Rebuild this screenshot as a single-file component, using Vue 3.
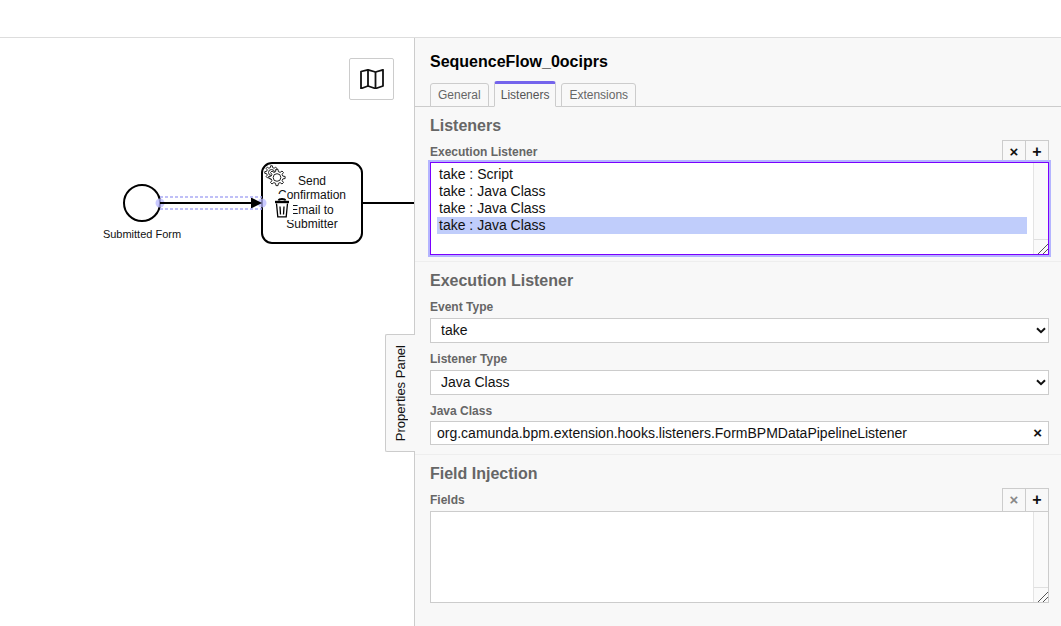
<template>
  <div class="page">
    <header class="topbar"></header>
    <div class="workspace">
      <div class="canvas">
        <svg class="diagram" width="414" height="588" viewBox="0 38 414 588">
          <path d="M362 203H414" class="flow" />
          <circle cx="142" cy="203" r="18" class="shape" />
          <text x="142" y="238" class="label" text-anchor="middle">Submitted Form</text>
          <rect x="262" y="163" width="100" height="80" rx="10" class="shape" />
          <text x="312" y="185" class="task-text" text-anchor="middle">Send</text>
          <text x="312" y="199" class="task-text" text-anchor="middle">Confirmation</text>
          <text x="312" y="214" class="task-text" text-anchor="middle">Email to</text>
          <text x="312" y="228" class="task-text" text-anchor="middle">Submitter</text>
          <circle cx="160" cy="203" r="4.500" class="handle" />
          <circle cx="262" cy="203" r="4.500" class="handle" />
          <path d="M160 203H254" class="flow" />
          <path d="M251 197.500L262 203L251 208.500Z" fill="#000" />
          <path d="M160 197H262M160 209H262" class="selection" />
          <!-- service task gears -->
          <g class="gear">
            <path :d="backGear" fill="#fff" />
            <circle cx="271.500" cy="172.500" r="3" />
            <path :d="frontGear" fill="#fff" />
            <circle cx="277" cy="177.500" r="3.800" fill="#fff" />
          </g>
          <!-- delete context pad entry -->
          <path d="M273 194H287V200H293V220H273Z" fill="#fff" />
          <g class="trash">
            <path d="M276.500 203.500L277.800 216.800H286.200L287.500 203.500" />
            <path d="M280 206.500L280.500 214.500M284 206.500L283.500 214.500" />
            <path d="M275 202H289" stroke-width="2.400" />
            <path d="M278.500 200.500Q279 199 282 199Q285 199 285.500 200.500" stroke-width="1.800" />
          </g>
        </svg>
        <button class="map-btn" type="button" aria-label="Toggle minimap">
          <svg width="24" height="20" viewBox="0 0 24 20">
            <path d="M1 2.500L8 .8L15.500 3L23 .8V17L15.500 19.500L8 17L1 19.500Z" />
            <path d="M8 .8V17M15.500 3V19.500" />
          </svg>
        </button>
        <div class="panel-toggle"><span>Properties Panel</span></div>
      </div>

      <aside class="panel">
        <div class="panel-head">
          <h1 class="panel-title">SequenceFlow_0ociprs</h1>
          <nav class="tabs">
            <a v-for="tab in tabs" :key="tab" class="tab" :class="{ active: tab === 'Listeners' }">{{ tab }}</a>
          </nav>
        </div>

        <section class="group group-listeners">
          <h2 class="group-title">Listeners</h2>
          <div class="field-head">
            <label>Execution Listener</label>
            <div class="actions">
              <button type="button" class="act cross">×</button>
              <button type="button" class="act">+</button>
            </div>
          </div>
          <div class="listbox focused">
            <div class="list-rows">
              <div
                v-for="(item, i) in listeners"
                :key="i"
                class="list-row"
                :class="{ selected: i === listeners.length - 1 }"
              >{{ item }}</div>
            </div>
            <div class="scroll-track"><div class="grip"></div></div>
          </div>
        </section>

        <section class="group group-detail">
          <h2 class="group-title">Execution Listener</h2>
          <label class="field-label first">Event Type</label>
          <div class="select-wrap">
            <select><option>take</option></select>
            <svg class="chevron" width="10" height="7" viewBox="0 0 10 7"><path d="M1 1.200L5 5.200L9 1.200" /></svg>
          </div>
          <label class="field-label">Listener Type</label>
          <div class="select-wrap">
            <select><option>Java Class</option></select>
            <svg class="chevron" width="10" height="7" viewBox="0 0 10 7"><path d="M1 1.200L5 5.200L9 1.200" /></svg>
          </div>
          <label class="field-label tight">Java Class</label>
          <div class="input-wrap">
            <input type="text" value="org.camunda.bpm.extension.hooks.listeners.FormBPMDataPipelineListener" />
            <span class="clear">×</span>
          </div>
        </section>

        <section class="group group-fields">
          <h2 class="group-title">Field Injection</h2>
          <div class="field-head">
            <label>Fields</label>
            <div class="actions">
              <button type="button" class="act cross muted">×</button>
              <button type="button" class="act">+</button>
            </div>
          </div>
          <div class="listbox">
            <div class="list-rows"></div>
            <div class="scroll-track"><div class="grip"></div></div>
          </div>
        </section>
      </aside>
    </div>
  </div>
</template>

<script setup>
const tabs = ['General', 'Listeners', 'Extensions']
const listeners = ['take : Script', 'take : Java Class', 'take : Java Class', 'take : Java Class']

// toothed outline for the service task icon
function gearPath(cx, cy, inner, outer, teeth) {
  const step = (Math.PI * 2) / teeth
  const pts = []
  for (let i = 0; i < teeth; i++) {
    const a = i * step
    const spots = [
      [inner, a - step * 0.3],
      [outer, a - step * 0.16],
      [outer, a + step * 0.16],
      [inner, a + step * 0.3]
    ]
    for (const [r, t] of spots) {
      pts.push((cx + r * Math.cos(t)).toFixed(2) + ' ' + (cy + r * Math.sin(t)).toFixed(2))
    }
  }
  return 'M' + pts.join('L') + 'Z'
}

const backGear = gearPath(271.5, 172.5, 5, 6.8, 8)
const frontGear = gearPath(277, 177.5, 6, 8.2, 8)
</script>

<style>
html, body { margin: 0; overflow: hidden; background: #fff; }
</style>

<style scoped>
.page {
  width: 1061px;
  height: 626px;
  display: flex;
  flex-direction: column;
  font-family: "Liberation Sans", Arial, sans-serif;
  color: #000;
  overflow: hidden;
}
.topbar {
  height: 38px;
  flex: none;
  box-sizing: border-box;
  border-bottom: 1px solid #ddd;
  background: #fff;
}
.workspace {
  flex: 1;
  display: flex;
  min-height: 0;
}
.canvas {
  width: 414px;
  flex: none;
  position: relative;
  background: #fff;
}
.diagram { display: block; }
.shape { fill: none; stroke: #000; stroke-width: 2; }
.flow { fill: none; stroke: #000; stroke-width: 2; }
.selection { fill: none; stroke: #aaaaf5; stroke-width: 1.500; stroke-dasharray: 3 2; }
.handle { fill: #b8b8ff; opacity: 0.75; }
.label { font-size: 11px; fill: #111; }
.task-text { font-size: 12px; fill: #111; }
.gear { stroke: #222; stroke-width: 1; fill: none; }
.trash { fill: none; stroke: #000; stroke-width: 1.300; }

.map-btn {
  position: absolute;
  left: 349px;
  top: 20px;
  width: 45px;
  height: 42px;
  padding: 0;
  display: flex;
  align-items: center;
  justify-content: center;
  background: #fff;
  border: 1px solid #ccc;
  border-radius: 2px;
}
.map-btn svg { fill: none; stroke: #111; stroke-width: 1.800; stroke-linejoin: round; }

.panel-toggle {
  position: absolute;
  left: 385px;
  top: 296px;
  z-index: 2;
  width: 30px;
  height: 118px;
  box-sizing: border-box;
  display: flex;
  align-items: center;
  justify-content: center;
  background: #f8f8f8;
  border: 1px solid #ccc;
  border-right: none;
  border-radius: 2px 0 0 2px;
}
.panel-toggle span {
  writing-mode: vertical-rl;
  transform: rotate(180deg);
  font-size: 13px;
  white-space: nowrap;
  color: #111;
}

.panel {
  flex: 1;
  box-sizing: border-box;
  background: #f8f8f8;
  border-left: 1px solid #ccc;
  min-width: 0;
}
.panel-head {
  height: 69px;
  box-sizing: border-box;
  border-bottom: 1px solid #ccc;
  padding: 15px 0 0 15px;
  position: relative;
}
.panel-title {
  margin: 0;
  font-size: 16px;
  line-height: 18px;
  font-weight: 700;
}
.tabs {
  display: flex;
  align-items: flex-end;
  gap: 5px;
  position: absolute;
  left: 15px;
  bottom: -1px;
}
.tab {
  box-sizing: border-box;
  height: 24px;
  padding: 0 7px;
  line-height: 23px;
  font-size: 12px;
  color: #666;
  background: #f8f8f8;
  border: 1px solid #ccc;
  border-radius: 3px 3px 0 0;
}
.tab.active {
  height: 26px;
  padding: 0 6px;
  line-height: 23px;
  color: #555;
  border-top: 3px solid #7464ec;
  border-bottom-color: #f8f8f8;
}

.group {
  box-sizing: border-box;
  padding: 0 12px 0 15px;
  border-bottom: 1px solid #eee;
}
.group-listeners { height: 155px; padding-top: 10px; }
.group-detail { height: 193px; padding-top: 10px; }
.group-fields { border-bottom: none; padding-top: 10px; }
.group-title {
  margin: 0;
  font-size: 16px;
  line-height: 18px;
  font-weight: 700;
  color: #666;
}
.field-head {
  display: flex;
  align-items: flex-end;
  justify-content: space-between;
  height: 26px;
}
.group-listeners .field-head { height: 27px; }
.field-head label, .field-label {
  font-size: 12px;
  line-height: 14px;
  font-weight: 700;
  color: #666;
}
.field-head label { position: relative; top: -2px; }
.group-listeners .field-head label { top: -3px; }
.field-label { display: block; margin: 9px 0 4px; }
.field-label.first { margin-top: 10px; }
.field-label.tight { margin-bottom: 3px; }
.actions { display: flex; margin-bottom: -1px; }
.act {
  width: 24px;
  height: 23px;
  box-sizing: border-box;
  padding: 0;
  background: #f8f8f8;
  border: 1px solid #ccc;
  border-bottom: none;
  margin-left: -1px;
  font: 700 16px/20px "Liberation Sans", Arial, sans-serif;
  color: #111;
}
.act.cross { font-size: 15px; }
.act.muted { color: #888; }

.listbox {
  box-sizing: border-box;
  height: 92px;
  display: flex;
  background: #fff;
  border: 1px solid #ccc;
}
.listbox.focused {
  border: 1px solid #7a00ff;
  box-shadow: 0 0 0 2px #b4b4ff;
  height: 93px;
  position: relative;
}
.group-fields .listbox { margin-top: 2px; }
.group-fields .actions { margin-bottom: -2px; }
.list-rows {
  flex: 1;
  padding: 3px 6px 0 6px;
  font-size: 14px;
  line-height: 17px;
  color: #111;
}
.list-row { padding-left: 2px; }
.list-row.selected { background: #c0cdfb; }
.scroll-track {
  width: 15px;
  flex: none;
  box-sizing: border-box;
  background: #fafafa;
  border-left: 1px solid #e4e4e4;
  position: relative;
}
.grip {
  position: absolute;
  right: 0;
  bottom: 0;
  width: 14px;
  height: 15px;
  box-sizing: border-box;
  border-top: 1px solid #e0e0e0;
  background: linear-gradient(135deg, transparent 0 62%, #555 62% 67%, transparent 67% 80%, #555 80% 85%, transparent 85%);
}

.select-wrap, .input-wrap { position: relative; }
.select-wrap select {
  display: block;
  width: 100%;
  height: 25px;
  box-sizing: border-box;
  appearance: none;
  background: #fff;
  border: 1px solid #ccc;
  border-radius: 0;
  padding: 0 10px 2px;
  font: 14px "Liberation Sans", Arial, sans-serif;
  color: #111;
}
.chevron {
  position: absolute;
  right: 3px;
  top: 9px;
  fill: none;
  stroke: #111;
  stroke-width: 2;
}
.input-wrap input {
  display: block;
  width: 100%;
  height: 24px;
  box-sizing: border-box;
  background: #fff;
  border: 1px solid #ccc;
  padding: 0 6px;
  font: 14px "Liberation Sans", Arial, sans-serif;
  color: #111;
}
.clear {
  position: absolute;
  right: 7px;
  top: 2px;
  font: 700 15px/20px "Liberation Sans", Arial, sans-serif;
  color: #111;
}
</style>
